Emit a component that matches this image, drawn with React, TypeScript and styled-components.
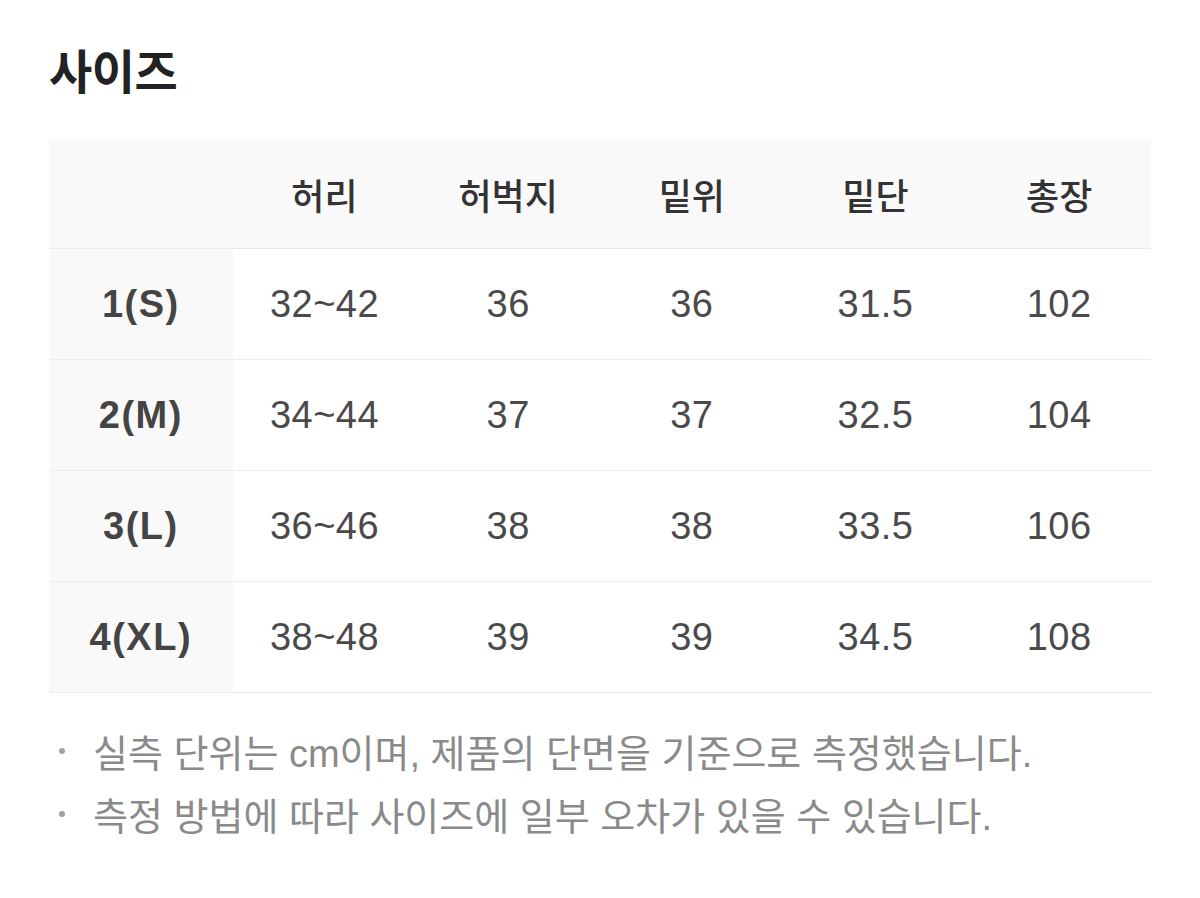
import React from 'react';
import styled, { createGlobalStyle } from 'styled-components';

const GlobalStyle = createGlobalStyle`
  html, body {
    margin: 0;
    padding: 0;
    background: #fff;
  }
  body {
    font-family: "Liberation Sans", "Noto Sans CJK KR", sans-serif;
  }
`;

const Page = styled.div`
  width: 1200px;
  min-height: 898px;
  padding: 45px 49px 0 49px;
  box-sizing: border-box;
  background: #fff;
`;

const Title = styled.h2`
  margin: 0;
  font-size: 47px;
  line-height: 55px;
  font-weight: 600;
  color: #222;
  letter-spacing: -0.5px;
`;

const Table = styled.div`
  margin-top: 40px;
  display: grid;
  grid-template-columns: repeat(6, 1fr);
  width: 100%;
`;

const HeadCell = styled.div`
  height: 108px;
  display: flex;
  align-items: center;
  justify-content: center;
  background: #f9f9f9;
  border-bottom: 1px solid #e9e9e9;
  font-size: 36px;
  font-weight: 500;
  color: #333;
`;

const Cell = styled.div<{ $label?: boolean }>`
  height: 110px;
  display: flex;
  align-items: center;
  justify-content: center;
  border-bottom: 1px solid #ececec;
  background: ${({ $label }) => ($label ? '#f9f9f9' : '#fff')};
  font-size: 38px;
  font-weight: ${({ $label }) => ($label ? 700 : 400)};
  letter-spacing: ${({ $label }) => ($label ? '1.5px' : '0.5px')};
  color: ${({ $label }) => ($label ? '#444' : '#4a4a4a')};
`;

const Notes = styled.ul`
  list-style: none;
  margin: 26px 0 0 0;
  padding: 0;
`;

const Note = styled.li`
  display: flex;
  align-items: center;
  height: 63px;
  font-size: 38px;
  color: #8a8a8a;
`;

const Bullet = styled.span`
  width: 6px;
  height: 6px;
  border-radius: 50%;
  background: #a0a0a0;
  margin: 0 28px 0 10px;
  flex-shrink: 0;
`;

const headers = ['', '허리', '허벅지', '밑위', '밑단', '총장'];

const rows = [
  ['1(S)', '32~42', '36', '36', '31.5', '102'],
  ['2(M)', '34~44', '37', '37', '32.5', '104'],
  ['3(L)', '36~46', '38', '38', '33.5', '106'],
  ['4(XL)', '38~48', '39', '39', '34.5', '108'],
];

const notes = [
  '실측 단위는 cm이며, 제품의 단면을 기준으로 측정했습니다.',
  '측정 방법에 따라 사이즈에 일부 오차가 있을 수 있습니다.',
];

const App: React.FC = () => {
  return (
    <>
      <GlobalStyle />
      <Page>
        <Title>사이즈</Title>
        <Table>
          {headers.map((h, i) => (
            <HeadCell key={i}>{h}</HeadCell>
          ))}
          {rows.map((r, rIdx) =>
            r.map((v, cIdx) => (
              <Cell key={`${rIdx}-${cIdx}`} $label={cIdx === 0}>
                {v}
              </Cell>
            ))
          )}
        </Table>
        <Notes>
          {notes.map((n, i) => (
            <Note key={i}>
              <Bullet />
              {n}
            </Note>
          ))}
        </Notes>
      </Page>
    </>
  );
};

export default App;
